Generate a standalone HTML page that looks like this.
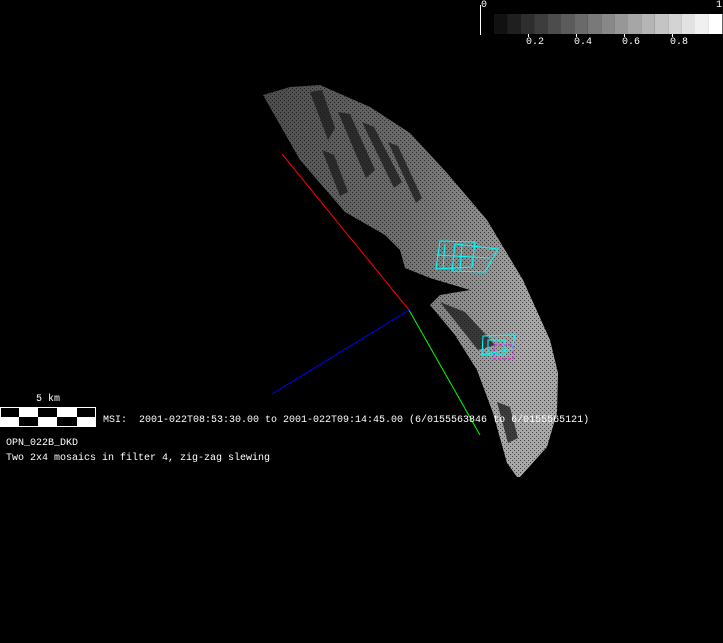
<!DOCTYPE html>
<html><head><meta charset="utf-8"><style>
html,body{margin:0;padding:0;background:#000;width:723px;height:643px;overflow:hidden}
.t{position:absolute;font-family:"Liberation Mono",monospace;font-size:10px;color:#fff;white-space:pre;line-height:12px}
</style></head><body>
<svg width="723" height="643" style="position:absolute;left:0;top:0">
<defs>
<linearGradient id="g" x1="0" y1="0" x2="1" y2="0.3">
<stop offset="0" stop-color="#4a4a4a"/><stop offset="0.55" stop-color="#707070"/><stop offset="1" stop-color="#a8a8a8"/>
</linearGradient>
<pattern id="dots" width="4" height="4" patternUnits="userSpaceOnUse">
<rect x="0" y="0" width="1" height="1" fill="#000" opacity="0.6"/><rect x="2" y="2" width="1" height="1" fill="#000" opacity="0.6"/>
</pattern>
</defs>
<g id="shape">
<path d="M263,95 L290,87 L320,85 L370,107 L410,133 L447,173 L487,220 L523,280 L550,340 L558,373 L557,413 L547,447 L520,477 L517,477 L507,463 L493,413 L477,370 L455,335 L430,305 L440,295 L470,290 L430,278 L405,268 L400,250 L385,235 L345,212 L300,160 Z" fill="url(#g)"/>
<path d="M263,95 L290,87 L320,85 L370,107 L410,133 L447,173 L487,220 L523,280 L550,340 L558,373 L557,413 L547,447 L520,477 L517,477 L507,463 L493,413 L477,370 L455,335 L430,305 L440,295 L470,290 L430,278 L405,268 L400,250 L385,235 L345,212 L300,160 Z" fill="url(#dots)"/>
</g>
<g fill="#1a1a1a" opacity="0.75">
<path d="M310,92 L322,90 L335,128 L328,140 Z"/>
<path d="M338,112 L350,114 L375,170 L366,178 Z"/>
<path d="M362,122 L374,127 L402,182 L394,188 Z"/>
<path d="M388,142 L398,146 L422,198 L416,203 Z"/>
<path d="M322,150 L334,155 L348,192 L340,196 Z"/>
<path d="M440,302 L465,312 L495,345 L478,350 Z"/>
<path d="M497,402 L510,407 L518,438 L508,443 Z"/>
</g>
<line x1="282" y1="154" x2="409" y2="310" stroke="#f00" stroke-width="1"/>
<line x1="409" y1="310" x2="480" y2="435" stroke="#0f0" stroke-width="1"/>
<line x1="409" y1="310" x2="272" y2="394" stroke="#00f" stroke-width="1"/>
<g fill="none" stroke="#0ff" stroke-width="1">
<path d="M440,241 L475,242 L472,267 L436,269 Z"/>
<path d="M455,244 L498,249 L485,272 L452,271 Z"/>
<path d="M437,255 L490,258"/><path d="M445,244 L443,268"/><path d="M462,244 L460,270"/>
<path d="M483,336 L515,335 L512,349 L482,355 Z"/>
<path d="M488,340 L505,340 L505,355 L488,355 Z"/>
</g>
<rect x="494" y="345" width="19" height="14" fill="none" stroke="#f0f" stroke-width="1" stroke-dasharray="3,2"/>
<line x1="480.5" y1="5" x2="480.5" y2="35" stroke="#fff"/>
<g>
<rect x="494" y="14" width="13.4" height="20" fill="#111"/>
<rect x="507.4" y="14" width="13.4" height="20" fill="#1f1f1f"/>
<rect x="520.8" y="14" width="13.4" height="20" fill="#2e2e2e"/>
<rect x="534.2" y="14" width="13.4" height="20" fill="#3d3d3d"/>
<rect x="547.6" y="14" width="13.4" height="20" fill="#4c4c4c"/>
<rect x="561" y="14" width="13.4" height="20" fill="#5b5b5b"/>
<rect x="574.4" y="14" width="13.4" height="20" fill="#6a6a6a"/>
<rect x="587.8" y="14" width="13.4" height="20" fill="#797979"/>
<rect x="601.2" y="14" width="13.4" height="20" fill="#888"/>
<rect x="614.6" y="14" width="13.4" height="20" fill="#979797"/>
<rect x="628" y="14" width="13.4" height="20" fill="#a6a6a6"/>
<rect x="641.4" y="14" width="13.4" height="20" fill="#b5b5b5"/>
<rect x="654.8" y="14" width="13.4" height="20" fill="#c4c4c4"/>
<rect x="668.2" y="14" width="13.4" height="20" fill="#d3d3d3"/>
<rect x="681.6" y="14" width="13.4" height="20" fill="#e2e2e2"/>
<rect x="695" y="14" width="13.4" height="20" fill="#f0f0f0"/>
<rect x="708.4" y="14" width="14" height="20" fill="#fff"/>
</g>
<g stroke="#fff"><line x1="528.5" y1="34" x2="528.5" y2="37"/><line x1="576.5" y1="34" x2="576.5" y2="37"/><line x1="624.5" y1="34" x2="624.5" y2="37"/><line x1="672.5" y1="34" x2="672.5" y2="37"/></g>
<rect x="0" y="407" width="96" height="20" fill="#fff"/>
<rect x="1" y="408" width="18" height="9" fill="#000"/>
<rect x="38" y="408" width="19" height="9" fill="#000"/>
<rect x="77" y="408" width="18" height="9" fill="#000"/>
<rect x="19" y="417" width="19" height="9" fill="#000"/>
<rect x="57" y="417" width="20" height="9" fill="#000"/>
</svg>
<div class="t" style="left:481px;top:0px">0</div>
<div class="t" style="left:716px;top:0px">1</div>
<div class="t" style="left:526px;top:37px">0.2</div>
<div class="t" style="left:574px;top:37px">0.4</div>
<div class="t" style="left:622px;top:37px">0.6</div>
<div class="t" style="left:670px;top:37px">0.8</div>
<div class="t" style="left:36px;top:394px">5 km</div>
<div class="t" style="left:103px;top:415px">MSI:  2001-022T08:53:30.00 to 2001-022T09:14:45.00 (6/0155563846 to 6/0155565121)</div>
<div class="t" style="left:6px;top:438px">OPN_022B_DKD</div>
<div class="t" style="left:6px;top:453px">Two 2x4 mosaics in filter 4, zig-zag slewing</div>
</body></html>
